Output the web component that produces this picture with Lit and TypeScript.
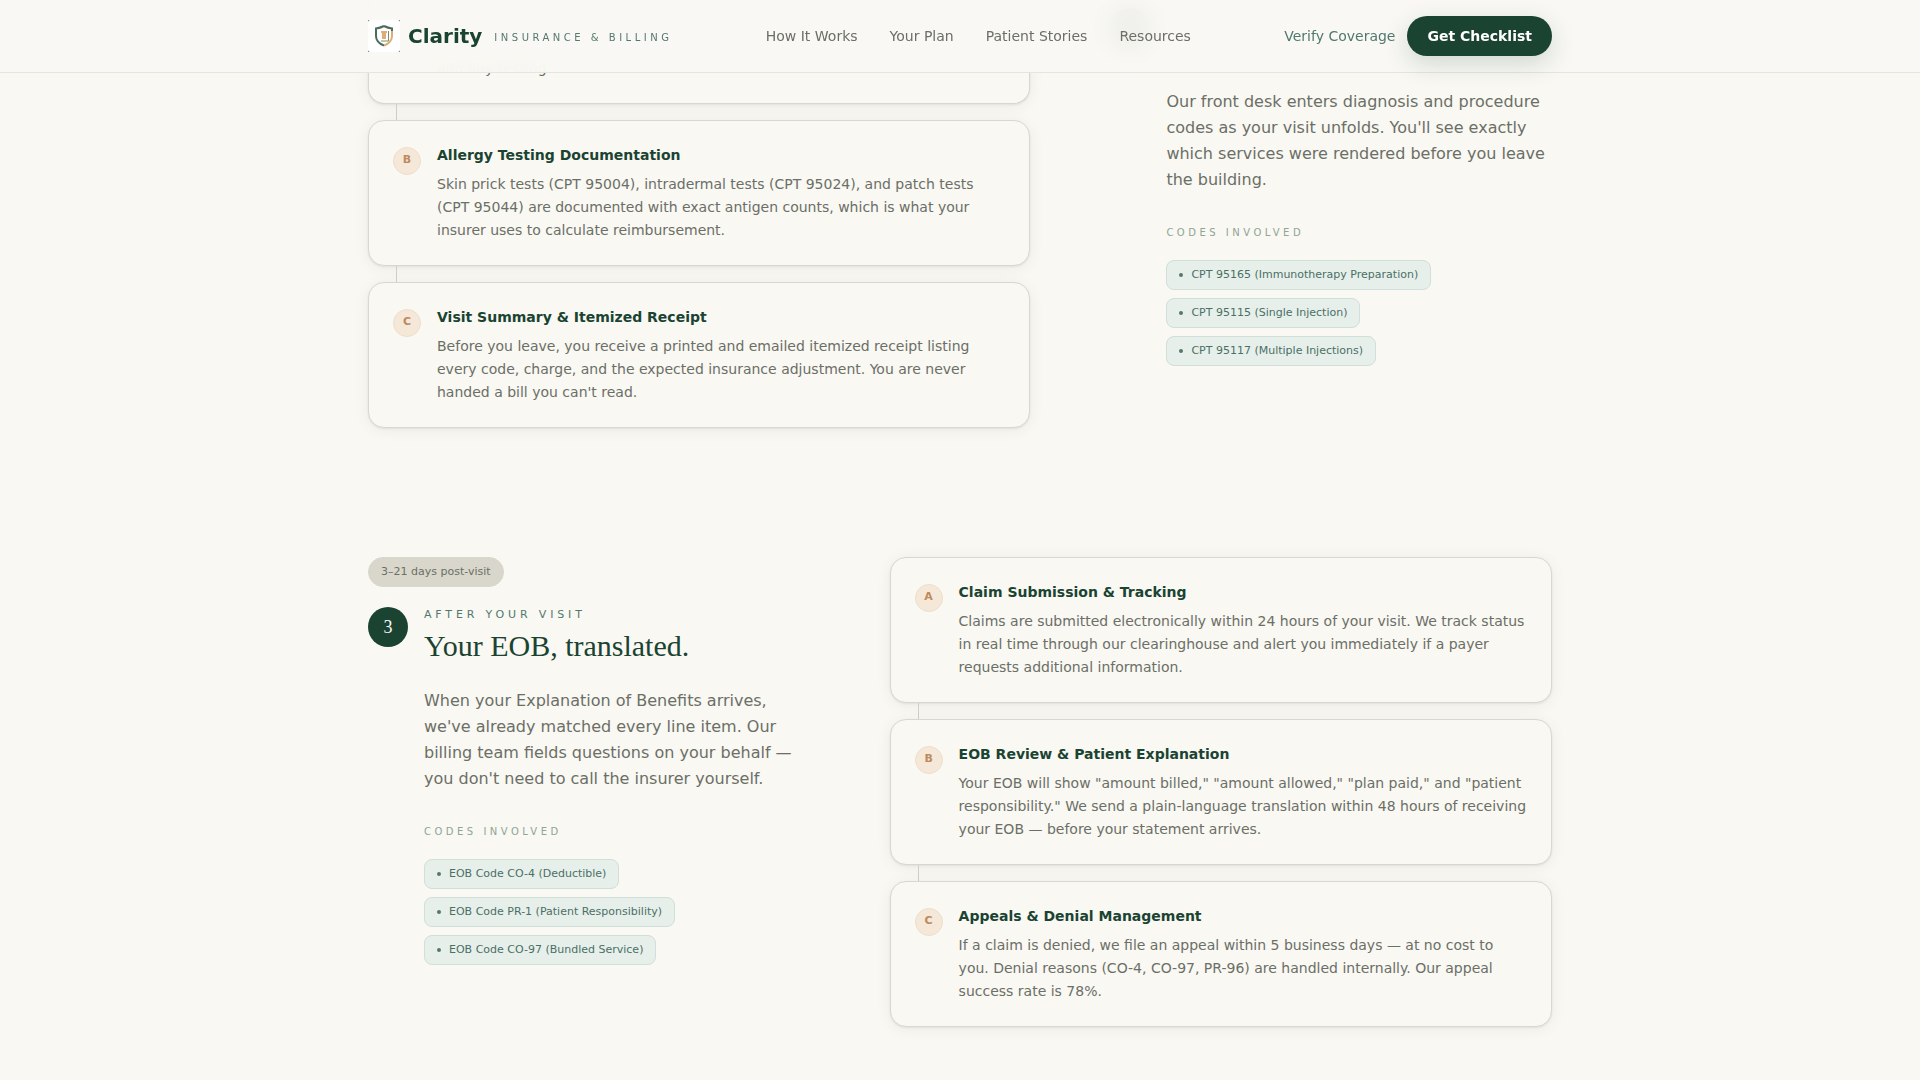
import { LitElement, html, css } from "lit";
import { customElement } from "lit/decorators.js";

interface Step {
  mark: string;
  title: string;
  text: string;
}

const visitSteps: Step[] = [
  {
    mark: "B",
    title: "Allergy Testing Documentation",
    text: "Skin prick tests (CPT 95004), intradermal tests (CPT 95024), and patch tests (CPT 95044) are documented with exact antigen counts, which is what your insurer uses to calculate reimbursement.",
  },
  {
    mark: "C",
    title: "Visit Summary & Itemized Receipt",
    text: "Before you leave, you receive a printed and emailed itemized receipt listing every code, charge, and the expected insurance adjustment. You are never handed a bill you can't read.",
  },
];

const afterSteps: Step[] = [
  {
    mark: "A",
    title: "Claim Submission & Tracking",
    text: "Claims are submitted electronically within 24 hours of your visit. We track status in real time through our clearinghouse and alert you immediately if a payer requests additional information.",
  },
  {
    mark: "B",
    title: "EOB Review & Patient Explanation",
    text: 'Your EOB will show "amount billed," "amount allowed," "plan paid," and "patient responsibility." We send a plain-language translation within 48 hours of receiving your EOB — before your statement arrives.',
  },
  {
    mark: "C",
    title: "Appeals & Denial Management",
    text: "If a claim is denied, we file an appeal within 5 business days — at no cost to you. Denial reasons (CO-4, CO-97, PR-96) are handled internally. Our appeal success rate is 78%.",
  },
];

@customElement("app-root")
export class AppRoot extends LitElement {
  static styles = css`
    :host {
      display: block;
      min-height: 100vh;
      background: #f9f8f3;
      color: #6b6f66;
      font-family: "DejaVu Sans", sans-serif;
      font-size: 14px;
      overflow: hidden;
    }
    * {
      box-sizing: border-box;
    }
    h2,
    h3,
    p,
    ul {
      margin: 0;
      padding: 0;
    }
    a {
      color: inherit;
      text-decoration: none;
    }
    .wrap {
      max-width: 1280px;
      margin: 0 auto;
      padding: 0 48px;
    }
    .top {
      position: fixed;
      inset: 0 0 auto 0;
      z-index: 5;
      background: rgba(249, 248, 243, 0.95);
      backdrop-filter: blur(12px);
      border-bottom: 1px solid #e6e5e0;
    }
    .bar {
      display: flex;
      align-items: center;
      justify-content: space-between;
      height: 72px;
    }
    .brand,
    .links,
    .actions {
      display: flex;
      align-items: center;
    }
    .logo {
      display: block;
      width: 32px;
      height: 32px;
      margin-right: 8px;
    }
    .name {
      color: #1b4332;
      font-size: 20px;
      font-weight: 700;
      margin-right: 12px;
    }
    .tagline {
      padding-top: 2px;
      color: #52796f;
      font-size: 10px;
      letter-spacing: 0.35em;
    }
    .links {
      gap: 32px;
    }
    .actions {
      gap: 12px;
    }
    .verify {
      color: #52796f;
    }
    .cta {
      height: 40px;
      padding: 0 20px;
      border: 0;
      border-radius: 20px;
      background: #1b4332;
      color: #ffffff;
      font: 700 14px "DejaVu Sans", sans-serif;
      box-shadow: 0 8px 24px rgba(27, 67, 50, 0.18);
    }
    .phase {
      display: grid;
      gap: 80px;
      align-items: start;
    }
    .phase + .phase {
      margin-top: 129px;
    }
    .cards-first {
      grid-template-columns: 3fr 2fr;
    }
    .cards-last {
      grid-template-columns: 2fr 3fr;
    }
    .card {
      display: flex;
      gap: 16px;
      padding: 24px 24px 23px;
      border: 1px solid #d8d7d0;
      border-radius: 16px;
      background: #f9f8f3;
      box-shadow: 0 1px 2px rgba(40, 40, 30, 0.08),
        0 2px 16px rgba(40, 40, 30, 0.06);
    }
    .card-tail {
      align-items: flex-end;
      height: 104px;
      padding-left: 68px;
      border-top: 0;
      border-radius: 0 0 16px 16px;
    }
    .link-line {
      width: 1px;
      height: 16px;
      margin-left: 28px;
      background: #d0cfc8;
    }
    .mark {
      flex: none;
      width: 28px;
      height: 28px;
      margin-top: 2px;
      border: 1px solid #eedfcb;
      border-radius: 50%;
      background: #f5e8d8;
      color: #bc8a5f;
      font-size: 11px;
      font-weight: 700;
      line-height: 24px;
      text-align: center;
    }
    .card-title {
      margin-bottom: 7px;
      color: #1b4332;
      font-size: 14px;
      line-height: 21px;
    }
    .card-text {
      line-height: 23px;
    }
    .pill {
      display: inline-block;
      margin-bottom: 20px;
      padding: 6px 12px;
      border: 1px solid #d9d7cb;
      border-radius: 16px;
      background: #d9d7cb;
      font-size: 11px;
      line-height: 16px;
    }
    .summary {
      display: flex;
      gap: 16px;
    }
    .summary-tail {
      padding-top: 8px;
    }
    .body-tail {
      padding-top: 81px;
    }
    .number {
      flex: none;
      width: 40px;
      height: 40px;
      border-radius: 50%;
      background: #1b4332;
      color: #f9f8f3;
      font: 18px/40px "Liberation Serif", serif;
      text-align: center;
    }
    .eyebrow {
      color: #52796f;
      font-size: 11px;
      line-height: 16px;
      letter-spacing: 0.35em;
      margin-bottom: 3px;
    }
    .heading {
      margin-bottom: 22px;
      color: #1b4332;
      font: 400 30px/40px "Liberation Serif", serif;
    }
    .lead {
      font-size: 16px;
      line-height: 26px;
    }
    .codes-label {
      margin: 32px 0 20px;
      color: #8fa596;
      font-size: 10px;
      font-weight: 400;
      line-height: 15px;
      letter-spacing: 0.35em;
    }
    .codes {
      display: flex;
      flex-direction: column;
      align-items: flex-start;
      gap: 8px;
      list-style: none;
    }
    .code {
      display: flex;
      align-items: center;
      gap: 8px;
      padding: 6px 12px;
      border: 1px solid #d0dfd9;
      border-radius: 8px;
      background: #e7efeb;
      color: #4a7066;
      font-size: 11px;
      line-height: 16px;
    }
    .code::before {
      content: "";
      width: 4px;
      height: 4px;
      border-radius: 50%;
      background: #52796f;
    }
  `;

  private card(step: Step) {
    return html`<article class="card">
      <span class="mark">${step.mark}</span>
      <div>
        <h3 class="card-title">${step.title}</h3>
        <p class="card-text">${step.text}</p>
      </div>
    </article>`;
  }

  private cards(steps: Step[]) {
    return steps.map((step, i) =>
      i ? html`<div class="link-line"></div>${this.card(step)}` : this.card(step),
    );
  }

  private codes(items: string[]) {
    return html`<h3 class="codes-label">CODES INVOLVED</h3>
      <ul class="codes">
        ${items.map((item) => html`<li class="code">${item}</li>`)}
      </ul>`;
  }

  render() {
    return html`
      <header class="top">
        <div class="wrap bar">
          <div class="brand">
            <svg class="logo" viewBox="0 0 32 32" aria-hidden="true">
              <rect width="32" height="32" fill="#3c5a4c" />
              <rect width="32" height="32" rx="2" fill="#ffffff" />
              <path d="M16 6 Q12 8 8 8.500 V16 Q8 22.500 16 25.500" fill="none" stroke="#4a6b60" stroke-width="2" />
              <path d="M16 25.500 Q24 22.500 24 16 V10" fill="none" stroke="#dcae76" stroke-width="2" />
              <path d="M16 6 Q20 8 24 8.500 V11" fill="none" stroke="#4a6b60" stroke-width="2" />
              <path d="M13 11 H19 V13 H18 V19 H14 V13 H13 Z" fill="#dfae78" />
              <path d="M20.500 11 V21 H13" fill="none" stroke="#7d8c6a" />
            </svg>
            <span class="name">Clarity</span>
            <span class="tagline">INSURANCE &amp; BILLING</span>
          </div>
          <nav class="links">
            <a href="#how">How It Works</a>
            <a href="#plan">Your Plan</a>
            <a href="#stories">Patient Stories</a>
            <a href="#resources">Resources</a>
          </nav>
          <div class="actions">
            <a class="verify" href="#verify">Verify Coverage</a>
            <button class="cta" type="button">Get Checklist</button>
          </div>
        </div>
      </header>

      <main class="wrap">
        <section class="phase cards-first">
          <div>
            <div class="card card-tail"><p class="card-text">and any testing</p></div>
            <div class="link-line"></div>
            ${this.cards(visitSteps)}
          </div>
          <div class="summary summary-tail">
            <div class="number"></div>
            <div class="body-tail">
              <p class="lead">
                Our front desk enters diagnosis and procedure codes as your visit unfolds. You'll see
                exactly which services were rendered before you leave the building.
              </p>
              ${this.codes([
                "CPT 95165 (Immunotherapy Preparation)",
                "CPT 95115 (Single Injection)",
                "CPT 95117 (Multiple Injections)",
              ])}
            </div>
          </div>
        </section>

        <section class="phase cards-last">
          <div>
            <span class="pill">3–21 days post-visit</span>
            <div class="summary">
              <div class="number">3</div>
              <div>
                <p class="eyebrow">AFTER YOUR VISIT</p>
                <h2 class="heading">Your EOB, translated.</h2>
                <p class="lead">
                  When your Explanation of Benefits arrives, we've already matched every line item.
                  Our billing team fields questions on your behalf — you don't need to call the
                  insurer yourself.
                </p>
                ${this.codes([
                  "EOB Code CO-4 (Deductible)",
                  "EOB Code PR-1 (Patient Responsibility)",
                  "EOB Code CO-97 (Bundled Service)",
                ])}
              </div>
            </div>
          </div>
          <div>${this.cards(afterSteps)}</div>
        </section>
      </main>
    `;
  }
}
